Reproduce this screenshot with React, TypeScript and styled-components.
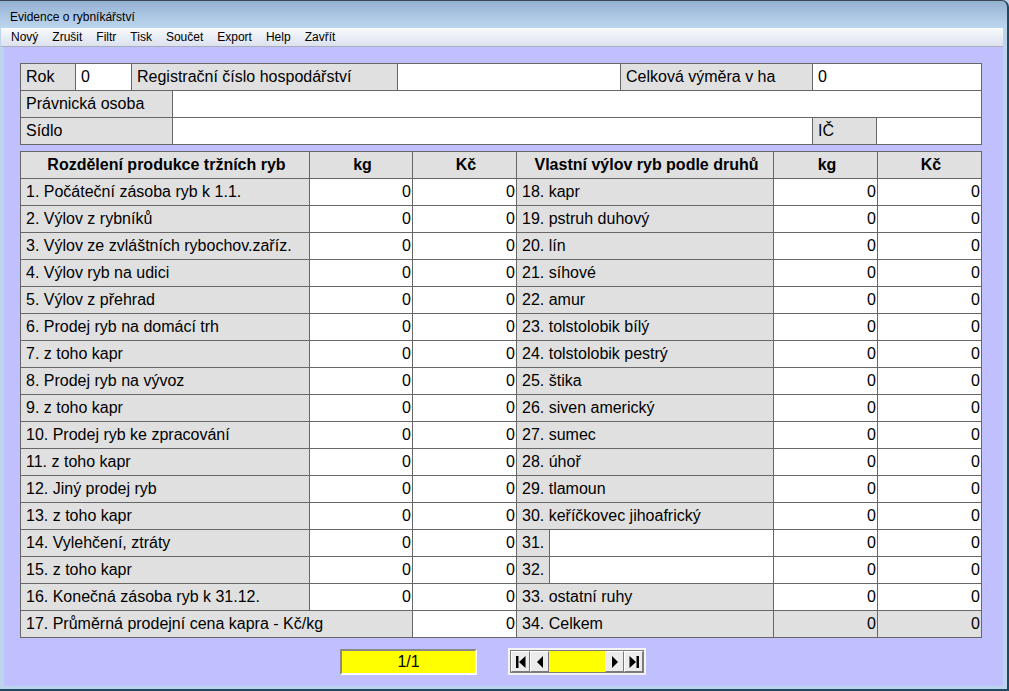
import React from "react";
import styled, { createGlobalStyle } from "styled-components";

//Global
const GlobalStyle = createGlobalStyle`
  html, body {
    margin: 0;
    padding: 0;
    background: #bcd4ec;
    overflow: hidden;
  }
  * {
    box-sizing: border-box;
  }
`;

//Window chrome
const Frame = styled.div`
  width: 1009px;
  height: 691px;
  display: flex;
  flex-direction: column;
  padding: 0 4px 3px 4px;
  border-top: 1px solid #3c4654;
  border-right: 2px solid #20485e;
  border-bottom: 2px solid #20485e;
  border-top-right-radius: 7px;
  background: linear-gradient(to bottom, #94b0cf 0px, #aac5e2 14px, #bdd6ef 27px, #bcd4ec 28px);
  font-family: "Liberation Sans", Arial, sans-serif;
`;

const TitleBar = styled.div`
  height: 27px;
  display: flex;
  align-items: flex-end;
  padding: 0 0 4px 6px;
  font-size: 12px;
  color: #000;
`;

const MenuBar = styled.ul`
  height: 19px;
  margin: 0 0 0 -3px;
  padding: 0 0 0 10px;
  list-style: none;
  display: flex;
  align-items: center;
  gap: 14px;
  background: linear-gradient(to bottom, #fafbfd, #e9edf5 50%, #dce2ee);
  border-bottom: 1px solid #a8aebb;
  font-size: 12px;
  color: #000;
`;

const MenuItem = styled.li`
  cursor: default;
`;

const Client = styled.div`
  flex: 1;
  background: #c0c0ff;
  padding: 16px 0 0 16px;
`;

//Tables
const Sheet = styled.table<{ $gap?: number }>`
  width: 962px;
  border-collapse: collapse;
  table-layout: fixed;
  margin-top: ${(p) => p.$gap ?? 0}px;
  font-family: "Liberation Sans", Arial, sans-serif;
  font-size: 16px;
  color: #000;

  tr {
    height: 27px;
  }
`;

const Cell = styled.td<{ $input?: boolean; $num?: boolean; $head?: boolean }>`
  border: 1px solid #676767;
  background: ${(p) => (p.$input ? "#ffffff" : "#e0e0e0")};
  padding: ${(p) => (p.$num ? "0 1px 1px 2px" : "0 2px 1px 5px")};
  text-align: ${(p) => (p.$head ? "center" : p.$num ? "right" : "left")};
  font-weight: ${(p) => (p.$head ? "bold" : "normal")};
  white-space: nowrap;
  overflow: hidden;
  line-height: 20px;
`;

//Footer
const Footer = styled.div`
  display: flex;
  align-items: center;
  gap: 31px;
  margin-top: 10px;
  padding-left: 320px;
`;

const Counter = styled.div`
  width: 137px;
  height: 26px;
  background: #ffff00;
  border: 2px solid;
  border-color: #8a8a8a #ffffff #ffffff #8a8a8a;
  text-align: center;
  font-size: 16px;
  line-height: 21px;
`;

const Navigator = styled.div`
  display: flex;
  height: 27px;
  padding: 2px;
  background: #f4f4f4;
`;

const NavInner = styled.div`
  display: flex;
  border: 1px solid #7c7c7c;
`;

const NavButton = styled.button`
  width: 19px;
  height: 21px;
  padding: 0;
  display: flex;
  align-items: center;
  justify-content: center;
  background: #ececec;
  border: 1px solid;
  border-color: #ffffff #7a7a7a #7a7a7a #ffffff;
  cursor: pointer;
`;

const NavField = styled.div`
  width: 56px;
  background: #ffff00;
`;

type NavKind = "first" | "prev" | "next" | "last";

const NavIcon: React.FC<{ kind: NavKind }> = ({ kind }) => {
  const flip = kind === "next" || kind === "last";
  const bar = kind === "first" || kind === "last";
  return (
    <svg width="10" height="12" viewBox="0 0 10 12" style={{ transform: flip ? "scaleX(-1)" : undefined }}>
      {bar && <rect x="0" y="0" width="2.5" height="12" fill="#000" />}
      <polygon points={bar ? "9.5,0 9.5,12 3,6" : "8,0 8,12 2,6"} fill="#000" />
    </svg>
  );
};

//Data
const leftRows = [
  "1. Počáteční zásoba ryb k 1.1.",
  "2. Výlov z rybníků",
  "3. Výlov ze zvláštních rybochov.zaříz.",
  "4. Výlov ryb na udici",
  "5. Výlov z přehrad",
  "6. Prodej ryb na domácí trh",
  "7. z toho kapr",
  "8. Prodej ryb na vývoz",
  "9. z toho kapr",
  "10. Prodej ryb ke zpracování",
  "11. z toho kapr",
  "12. Jiný prodej ryb",
  "13. z toho kapr",
  "14. Vylehčení, ztráty",
  "15. z toho kapr",
  "16. Konečná zásoba ryb k 31.12.",
  "17. Průměrná prodejní cena kapra - Kč/kg",
];

const rightRows = [
  "18. kapr",
  "19. pstruh duhový",
  "20. lín",
  "21. síhové",
  "22. amur",
  "23. tolstolobik bílý",
  "24. tolstolobik pestrý",
  "25. štika",
  "26. siven americký",
  "27. sumec",
  "28. úhoř",
  "29. tlamoun",
  "30. keříčkovec jihoafrický",
  "31.",
  "32.",
  "33. ostatní ruhy",
  "34. Celkem",
];

const menu = ["Nový", "Zrušit", "Filtr", "Tisk", "Součet", "Export", "Help", "Zavřít"];

const App: React.FC = () => {
  return (
    <>
      <GlobalStyle />
      <Frame>
        <TitleBar>Evidence o rybníkářství</TitleBar>
        <MenuBar>
          {menu.map((m) => (
            <MenuItem key={m}>{m}</MenuItem>
          ))}
        </MenuBar>
        <Client>
          <Sheet>
            <colgroup>
              <col style={{ width: 55 }} />
              <col style={{ width: 56 }} />
              <col style={{ width: 41 }} />
              <col style={{ width: 225 }} />
              <col style={{ width: 223 }} />
              <col style={{ width: 192 }} />
              <col style={{ width: 64 }} />
              <col style={{ width: 105 }} />
            </colgroup>
            <tbody>
              <tr>
                <Cell>Rok</Cell>
                <Cell $input>0</Cell>
                <Cell colSpan={2}>Registrační číslo hospodářství</Cell>
                <Cell $input />
                <Cell>Celková výměra v ha</Cell>
                <Cell $input colSpan={2}>0</Cell>
              </tr>
              <tr>
                <Cell colSpan={3}>Právnická osoba</Cell>
                <Cell $input colSpan={5} />
              </tr>
              <tr>
                <Cell colSpan={3}>Sídlo</Cell>
                <Cell $input colSpan={3} />
                <Cell>IČ</Cell>
                <Cell $input />
              </tr>
            </tbody>
          </Sheet>

          <Sheet $gap={6}>
            <colgroup>
              <col style={{ width: 289 }} />
              <col style={{ width: 103 }} />
              <col style={{ width: 104 }} />
              <col style={{ width: 33 }} />
              <col style={{ width: 224 }} />
              <col style={{ width: 104 }} />
              <col style={{ width: 104 }} />
            </colgroup>
            <tbody>
              <tr>
                <Cell $head>Rozdělení produkce tržních ryb</Cell>
                <Cell $head>kg</Cell>
                <Cell $head>Kč</Cell>
                <Cell $head colSpan={2}>Vlastní výlov ryb podle druhů</Cell>
                <Cell $head>kg</Cell>
                <Cell $head>Kč</Cell>
              </tr>
              {leftRows.map((label, i) => {
                const right = rightRows[i];
                const isLast = i === leftRows.length - 1;
                const isBlank = right === "31." || right === "32.";
                return (
                  <tr key={label}>
                    {isLast ? (
                      <Cell colSpan={2}>{label}</Cell>
                    ) : (
                      <>
                        <Cell>{label}</Cell>
                        <Cell $input $num>0</Cell>
                      </>
                    )}
                    <Cell $input $num>0</Cell>
                    {isBlank ? (
                      <>
                        <Cell>{right}</Cell>
                        <Cell $input />
                      </>
                    ) : (
                      <Cell colSpan={2}>{right}</Cell>
                    )}
                    <Cell $input={!isLast} $num>0</Cell>
                    <Cell $input={!isLast} $num>0</Cell>
                  </tr>
                );
              })}
            </tbody>
          </Sheet>

          <Footer>
            <Counter>1/1</Counter>
            <Navigator>
              <NavInner>
                <NavButton aria-label="První">
                  <NavIcon kind="first" />
                </NavButton>
                <NavButton aria-label="Předchozí">
                  <NavIcon kind="prev" />
                </NavButton>
                <NavField />
                <NavButton aria-label="Další">
                  <NavIcon kind="next" />
                </NavButton>
                <NavButton aria-label="Poslední">
                  <NavIcon kind="last" />
                </NavButton>
              </NavInner>
            </Navigator>
          </Footer>
        </Client>
      </Frame>
    </>
  );
};

export default App;
